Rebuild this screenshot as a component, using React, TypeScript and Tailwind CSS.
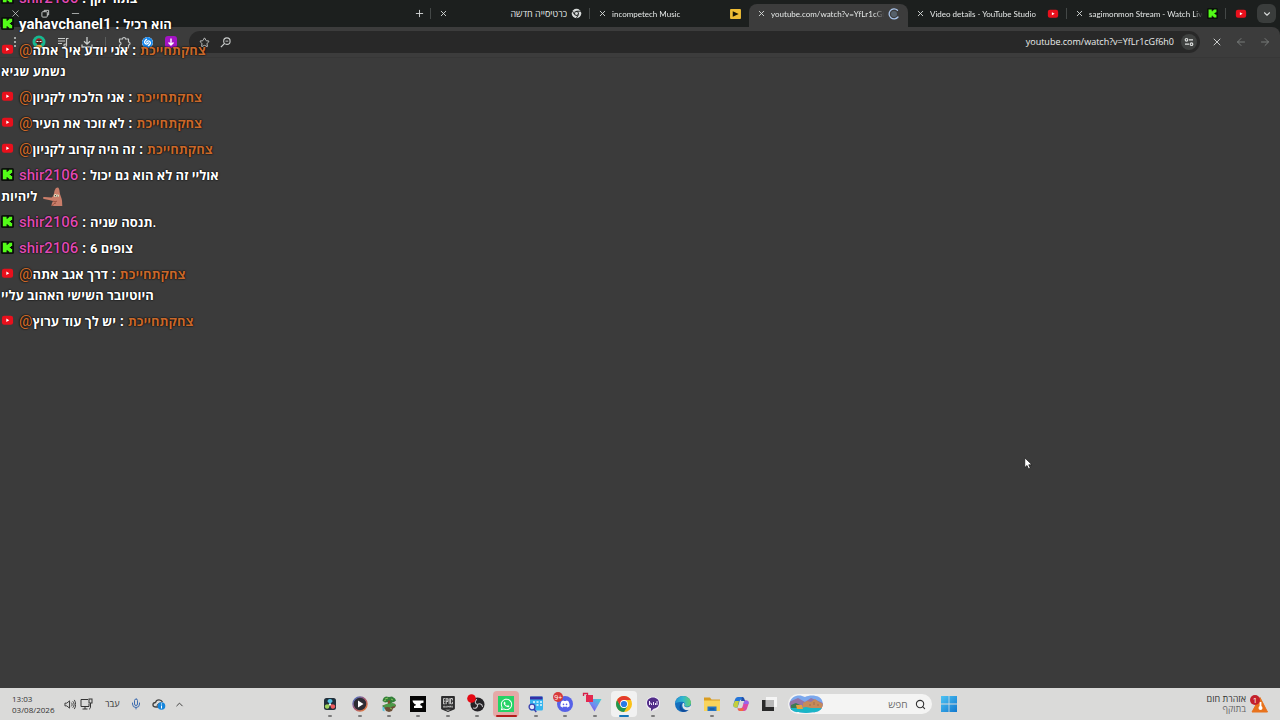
import type { ReactNode } from "react";
import {
  ArrowLeft,
  ArrowRight,
  ChevronDown,
  ChevronUp,
  Mic,
  Minus,
  Plus,
  Search,
  Star,
  X,
} from "lucide-react";
import { FaDiscord, FaWhatsapp } from "react-icons/fa";
import { SiEpicgames, SiShazam } from "react-icons/si";

/* ---------- shared brand icons ---------- */

function KickIcon({ className }: { className?: string }) {
  return (
    <svg viewBox="0 0 14 14" className={className} aria-hidden="true">
      <rect width="14" height="14" rx="2" fill="#0b0f0b" />
      <path
        fill="#53fc18"
        d="M2 2h4v2h1.300V3h1.400V2H12v3.500h-1.300v1H9.500v1h1.200v1H12V12H8.700v-1H7.300v-1H6v2H2z"
      />
    </svg>
  );
}

function YouTubeIcon({ className }: { className?: string }) {
  return (
    <svg viewBox="0 0 14 14" className={className} aria-hidden="true">
      <rect x="1" y="2" width="12" height="9.500" rx="2.400" fill="#e8101c" />
      <path fill="#fff" d="M5.700 4.900v3.700l3.200-1.850z" />
    </svg>
  );
}

function ChromeMono() {
  return (
    <svg viewBox="0 0 12 12" className="size-[11px] shrink-0" aria-hidden="true">
      <circle cx="6" cy="6" r="5.200" fill="#d8dbda" />
      <circle cx="6" cy="6" r="2.600" fill="#1c1f1e" />
      <circle cx="6" cy="6" r="1.600" fill="#d8dbda" />
      <path d="M6 3.500h5M3.800 7.200L1.400 3M8.200 7.200L5.700 11.300" stroke="#1c1f1e" strokeWidth="1" />
    </svg>
  );
}

function PlayFavicon() {
  return (
    <svg viewBox="0 0 12 11" className="h-[10px] w-[11px] shrink-0" aria-hidden="true">
      <rect width="12" height="11" rx="1" fill="#efbd35" />
      <path d="M3 2.500v6l6.500-3z" fill="#1b1605" />
    </svg>
  );
}

function LoadingIcon() {
  return (
    <svg viewBox="0 0 12 12" className="size-3 shrink-0" fill="none" aria-hidden="true">
      <circle cx="6" cy="6" r="3" fill="#56616b" />
      <path d="M9.500 2.200A5 5 0 1 0 10 9" stroke="#a9c4ea" strokeWidth="1.300" strokeLinecap="round" />
    </svg>
  );
}

/* ---------- browser ---------- */

type TabProps = { title: string; icon: ReactNode; active?: boolean; line?: boolean; rtl?: boolean };

const tabs: TabProps[] = [
  { title: "כרטיסייה חדשה", icon: <ChromeMono />, line: true, rtl: true },
  { title: "incompetech Music", icon: <PlayFavicon /> },
  { title: "youtube.com/watch?v=YfLr1cGf6h0", icon: <LoadingIcon />, active: true },
  { title: "Video details - YouTube Studio", icon: <YouTubeIcon className="size-3 shrink-0" />, line: true },
  { title: "sagimonmon Stream - Watch Live on Kick", icon: <KickIcon className="size-[11px] shrink-0" />, line: true },
];

function Tab({ title, icon, active, line, rtl }: TabProps) {
  return (
    <div
      className={
        "relative flex h-[23px] w-[159px] min-w-0 items-center gap-1 rounded-t-lg px-2 pb-1 " +
        (active ? "bg-[#3c3c3c]" : "")
      }
    >
      <button aria-label="Close tab" className="shrink-0 text-[#d9dcdb]">
        <X size={9} strokeWidth={2.4} />
      </button>
      <span
        dir={rtl ? "rtl" : "ltr"}
        className={
          "ml-px flex-1 overflow-hidden whitespace-nowrap font-[Lato,'Open_Sans',sans-serif] leading-3 text-[#e6e9e8] " +
          (rtl ? "text-[9px]" : "text-[8px] [mask-image:linear-gradient(to_right,black_92%,transparent)]")
        }
      >
        {title}
      </span>
      {icon}
      {line && <span className="absolute right-0 h-[11px] w-px bg-[#444847]" />}
    </div>
  );
}

function TabStrip() {
  return (
    <div className="flex h-[27px] items-end bg-[#1c1f1e] pr-1 text-[#d4d7d6]">
      <div className="flex h-full items-center gap-5 pl-[10px]">
        <button aria-label="Close">
          <X size={11} strokeWidth={1.6} />
        </button>
        <button aria-label="Restore">
          <svg viewBox="0 0 10 10" className="size-[9px]" fill="none" stroke="currentColor">
            <rect x="1" y="3" width="6" height="6" rx="1" />
            <path d="M3.500 3V1.500h5v5H7" />
          </svg>
        </button>
        <button aria-label="Minimize">
          <Minus size={11} strokeWidth={1.6} />
        </button>
      </div>
      <div className="min-w-0 flex-1" />
      <button aria-label="New tab" className="mr-[5px] flex h-[23px] items-center pb-1">
        <Plus size={11} strokeWidth={2} />
      </button>
      <span className="mb-2 h-[11px] w-px bg-[#444847]" />
      {tabs.map((tab) => (
        <Tab key={tab.title} {...tab} />
      ))}
      <div className="flex h-[23px] w-[30px] items-center justify-center pb-1">
        <YouTubeIcon className="size-3" />
      </div>
      <button
        aria-label="Search tabs"
        className="mb-1 ml-px flex size-[19px] items-center justify-center rounded-md bg-[#3a3d3c]"
      >
        <ChevronDown size={10} strokeWidth={2.6} />
      </button>
    </div>
  );
}

function Toolbar() {
  return (
    <div className="bg-[#1c1f1e]">
      <div className="flex h-[31px] items-center rounded-tr-lg border-b border-[#373737] bg-[#3c3c3c] pr-[9px] text-[#c9cccb]">
        <div className="flex w-[189px] shrink-0 items-center justify-between pl-[10px] pr-3">
          <button aria-label="Menu">
            <svg viewBox="0 0 10 12" className="h-3 w-[10px]" fill="currentColor">
              <circle cx="5" cy="2" r="1" />
              <circle cx="5" cy="6" r="1" />
              <circle cx="5" cy="10" r="1" />
            </svg>
          </button>
          <button aria-label="Profile">
            <svg viewBox="0 0 14 14" className="size-[14px]">
              <circle cx="7" cy="7" r="6.500" fill="#17b890" />
              <path d="M3.500 7c0-5 7-5 7 0v1h-7z" fill="#9b2226" />
              <circle cx="7" cy="7.500" r="2.500" fill="#37251f" />
              <path d="M3.500 12c1-3 6-3 7 0l-3.500 1.500z" fill="#f2a541" />
              <path d="M4.500 6.500h2M7.500 6.500h2" stroke="#eee" />
            </svg>
          </button>
          <button aria-label="Media controls">
            <svg viewBox="0 0 12 12" className="size-3" fill="none" stroke="currentColor" strokeWidth="1.200">
              <path d="M1 2.500h7M1 5h7M1 7.500h4M9.500 9.500V2.500h2" />
              <circle cx="8.200" cy="9.300" r="1.300" />
            </svg>
          </button>
          <button aria-label="Downloads">
            <svg viewBox="0 0 12 12" className="size-3" fill="none" stroke="currentColor" strokeWidth="1.300">
              <path d="M6 1v7M3 5.200l3 3 3-3M1 8.500V11h10V8.500" />
            </svg>
          </button>
          <span className="h-[10px] w-px bg-[#5a5d5c]" />
          <button aria-label="Extensions">
            <svg viewBox="0 0 13 13" className="size-[13px]" fill="none" stroke="currentColor" strokeWidth="1.200">
              <path d="M1.500 3H4.500a1.500 1.500 0 0 1 3 0H10.500V6a1.500 1.500 0 0 1 0 3v3H1.500V9a1.500 1.500 0 0 0 0-3z" strokeLinejoin="round" />
            </svg>
          </button>
          <button aria-label="Shazam">
            <SiShazam size={11} className="rounded-full bg-white text-[#1688ef]" />
          </button>
          <button aria-label="Video downloader">
            <svg viewBox="0 0 12 12" className="size-3">
              <rect width="12" height="12" rx="3" fill="#a414c4" />
              <path d="M6 2.500v6M3.500 6.500L6 9l2.500-2.500" stroke="#fff" strokeWidth="1.400" fill="none" />
            </svg>
          </button>
        </div>
        <div className="flex h-[22px] min-w-0 flex-1 items-center gap-[10px] rounded-full bg-[#282828] pl-[10px] pr-[3px]">
          <button aria-label="Bookmark">
            <Star size={11} strokeWidth={2} />
          </button>
          <button aria-label="Zoom">
            <svg viewBox="0 0 12 12" className="size-[11px]" fill="none" stroke="currentColor">
              <circle cx="7.500" cy="4.500" r="3.500" strokeWidth="1.200" />
              <path d="M5 7L1 11" strokeWidth="1.400" />
              <path d="M6 4.500h3" />
            </svg>
          </button>
          <input
            type="text"
            aria-label="Address"
            defaultValue="youtube.com/watch?v=YfLr1cGf6h0"
            className="min-w-0 flex-1 bg-transparent text-right text-[9px] leading-3 text-[#ebedec] outline-none"
          />
          <button
            aria-label="Site information"
            className="-ml-[3px] flex size-4 items-center justify-center rounded-full bg-[#3f4140] text-[#dfe1e0]"
          >
            <svg viewBox="0 0 10 10" className="size-[10px]" fill="none" stroke="currentColor" strokeWidth="1.200">
              <circle cx="2.500" cy="2.800" r="1.300" />
              <path d="M5 2.800h4M1 7.200h4" />
              <circle cx="7.500" cy="7.200" r="1.300" />
            </svg>
          </button>
        </div>
        <div className="flex shrink-0 items-center gap-3 pl-[11px]">
          <button aria-label="Stop">
            <X size={12} strokeWidth={2} />
          </button>
          <button aria-label="Forward" className="text-[#777a79]">
            <ArrowLeft size={12} strokeWidth={2} />
          </button>
          <button aria-label="Back" className="text-[#777a79]">
            <ArrowRight size={12} strokeWidth={2} />
          </button>
        </div>
      </div>
    </div>
  );
}

/* ---------- stream chat ---------- */

type Message = { from: "kick" | "youtube"; user: string; text: string; color?: string; emote?: boolean };

const PINK = "text-[#e04bb4] font-medium";

const messages: Message[] = [
  { from: "kick", user: "shir2106", text: "בתור זקן", color: PINK },
  { from: "kick", user: "yahavchanel1", text: "הוא רכיל" },
  { from: "youtube", user: "צחקתחייכת", text: "אני יודע איך אתה נשמע שגיא" },
  { from: "youtube", user: "צחקתחייכת", text: "אני הלכתי לקניון" },
  { from: "youtube", user: "צחקתחייכת", text: "לא זוכר את העיר" },
  { from: "youtube", user: "צחקתחייכת", text: "זה היה קרוב לקניון" },
  { from: "kick", user: "shir2106", text: "אוליי זה לא הוא גם יכול ליהיות", color: PINK, emote: true },
  { from: "kick", user: "shir2106", text: "תנסה שניה.", color: PINK },
  { from: "kick", user: "shir2106", text: "6 צופים", color: PINK },
  { from: "youtube", user: "צחקתחייכת", text: "דרך אגב אתה היוטיובר השישי האהוב עליי" },
  { from: "youtube", user: "צחקתחייכת", text: "יש לך עוד ערוץ" },
];

function PatrickEmote() {
  return (
    <svg viewBox="0 0 20 20" className="ml-[6px] inline-block size-5 align-middle" aria-hidden="true">
      <path
        d="M14.500 0.500c1.500 0 2 2 2.200 5 .3 3 2 5 2.300 8l.3 5.500H8.500c0-2 .7-3.500 1.500-5l-4-1-5-1c-1.500-.5-1-2.500.5-2l7 .5c1.500-1 2-2 2.500-4 .5-3 1.500-6 3.500-6z"
        fill="#c97d69"
      />
      <path d="M10 14c1 1 3 1 4 0M9.500 19c.5-2 2-3 3.500-3" stroke="#94503f" fill="none" />
      <circle cx="12.300" cy="8.500" r="1.500" fill="#e9e4c5" />
      <circle cx="14.800" cy="8.700" r="1.300" fill="#e9e4c5" />
      <circle cx="12.400" cy="8.700" r=".6" fill="#222" />
      <circle cx="14.700" cy="8.900" r=".5" fill="#222" />
    </svg>
  );
}

function ChatLine({ from, user, text, color, emote }: Message) {
  return (
    <li>
      {from === "kick" ? (
        <>
          <KickIcon className="mr-[5px] inline-block size-[13px] align-[-1px]" />
          <span className={color}>{user}</span>
        </>
      ) : (
        <>
          <YouTubeIcon className="mr-[5px] inline-block size-[13px] align-[-1px]" />
          <span className="text-[#c8682b]">
            <span className="font-medium">@</span>
            <span className="text-[13px] leading-none">{user}</span>
          </span>
        </>
      )}
      {" : "}
      <span className="text-[13px] leading-none">{text}</span>
      {emote && <PatrickEmote />}
    </li>
  );
}

function Chat() {
  return (
    <ul className="pointer-events-none absolute -top-3 left-0 flex w-[232px] flex-col gap-[5px] px-px font-[Roboto,'Open_Sans',sans-serif] text-[15px] font-bold leading-[21px] text-white [text-shadow:0_0_2px_#000,0_0_1px_#000]">
      {messages.map((m, i) => (
        <ChatLine key={i} {...m} />
      ))}
    </ul>
  );
}

/* ---------- taskbar ---------- */

type App = { name: string; icon: ReactNode; running?: boolean; state?: "alert" | "focus" };

const svg = "size-4 overflow-visible";

const apps: App[] = [
  {
    name: "DaVinci Resolve",
    running: true,
    icon: (
      <svg viewBox="0 0 16 16" className={svg}>
        <rect x="2" y="2" width="12" height="12" rx="2.500" fill="#22303c" />
        <path d="M8 8.200L5.500 5.500a2.500 2.500 0 1 1 5 0z" fill="#58c7e8" />
        <path d="M8 8.200l-1 3.500a2.300 2.300 0 1 1-3-3.300z" fill="#9fd35f" />
        <path d="M8 8.200l1 3.500a2.300 2.300 0 1 0 3-3.300z" fill="#ef5d60" />
        <circle cx="8" cy="8.500" r="1" fill="#fff" />
      </svg>
    ),
  },
  {
    name: "Media player",
    running: true,
    icon: (
      <svg viewBox="0 0 16 16" className={svg}>
        <defs>
          <linearGradient id="player" x1="0" y1="0" x2="1" y2="1">
            <stop stopColor="#3f74c9" />
            <stop offset=".5" stopColor="#a85873" />
            <stop offset="1" stopColor="#ed8231" />
          </linearGradient>
        </defs>
        <circle cx="8" cy="8" r="7" fill="#2d2c33" stroke="url(#player)" strokeWidth="1.500" />
        <path d="M6 4.500v7l5.500-3.500z" fill="#fff" />
      </svg>
    ),
  },
  {
    name: "Terraria",
    running: true,
    icon: (
      <svg viewBox="0 0 16 16" className={svg}>
        <path d="M3 1.500l2-1 3 .5 3-.5 3 2 1 2-2 1.500-2 .5-1 1.500H8L6.500 6 4 6.500 1.500 5l.5-2z" fill="#33803a" />
        <path d="M7 4.500h2l.5 5H6.500z" fill="#7d4c2c" />
        <path d="M1.500 9.500l4-1 8-1 1.500 2-1 2-2 1-1 2.500-3 1-3-1-1-2-2-1z" fill="#6c4d35" />
        <path d="M1.500 9.500l4-1.500 6-1 3 1.500v1.500l-3 .5-2 1-3-.5-3 .5z" fill="#4c9a48" />
        <path d="M1.500 10.500l2 1v4l-2-1z" fill="#5cc7df" />
        <path d="M4 3l3-1M10 3l2 1M3 5l2-1M9 12l2 1" stroke="#86c45a" />
      </svg>
    ),
  },
  {
    name: "Anvil",
    running: true,
    icon: (
      <svg viewBox="0 0 16 16" className={svg}>
        <rect width="16" height="16" fill="#050505" />
        <path d="M2.500 4.500h11v2.300c-2 0-3 .7-3.300 1.700.2.800.8 1.300 2 1.500v2H4v-2c1.300-.2 2-.7 2-1.500C4.500 8.300 3 7 2.500 4.500z" fill="#fff" />
      </svg>
    ),
  },
  { name: "Epic Games", running: true, icon: <SiEpicgames size={16} className="text-[#2c2c2d]" /> },
  {
    name: "OBS Studio",
    running: true,
    icon: (
      <svg viewBox="0 0 16 16" className={svg}>
        <circle cx="8.500" cy="8.500" r="7" fill="#252327" />
        <path
          d="M8.500 8.500C6 8 5.500 5.500 7.500 3.500M8.500 8.500c2-1.500 4.500-.5 5 2M8.500 8.500c.5 2.500-1.500 4.300-4 3.500"
          stroke="#c6c4c7"
          strokeWidth="1.100"
          fill="none"
          strokeLinecap="round"
        />
        <circle cx="2.500" cy="2.500" r="4.300" fill="#e50914" />
      </svg>
    ),
  },
  {
    name: "WhatsApp",
    state: "alert",
    icon: (
      <span className="flex size-4 items-center justify-center bg-[#25d366] text-white">
        <FaWhatsapp size={13} />
      </span>
    ),
  },
  {
    name: "Scheduler",
    running: true,
    icon: (
      <svg viewBox="0 0 16 16" className={svg}>
        <rect x="2" y="0.500" width="13" height="14" rx="1.500" fill="#35b5ef" />
        <path d="M2 0.500h12.500v3H2z" fill="#352fa5" />
        <path d="M5 6h2M8.500 6h2M12 6h2M8.500 9h2M12 9h2" stroke="#e5f9ff" strokeWidth="1.300" />
        <circle cx="4" cy="11" r="2.900" fill="#e3e7fb" stroke="#3940ae" strokeWidth="1.300" />
        <path d="M6 13.200l2.300 2.800" stroke="#3940ae" strokeWidth="1.400" />
      </svg>
    ),
  },
  {
    name: "Discord",
    running: true,
    icon: (
      <span className="relative block">
        <span className="flex size-4 items-center justify-center rounded-full bg-[#5661e8] text-white">
          <FaDiscord size={10} />
        </span>
        <span className="absolute -left-1 -top-1 flex h-[10px] items-center rounded-full bg-[#d83a3a] px-px text-[7px] leading-none text-white">
          9+
        </span>
      </span>
    ),
  },
  {
    name: "Proton",
    running: true,
    icon: (
      <svg viewBox="0 0 16 16" className={svg}>
        <defs>
          <linearGradient id="prism" x1="1" y1="0" x2="0" y2="1">
            <stop stopColor="#3fd3cd" />
            <stop offset=".5" stopColor="#718af2" />
            <stop offset="1" stopColor="#7637d5" />
          </linearGradient>
        </defs>
        <path d="M0 3h14.500L7.500 15.500z" fill="url(#prism)" />
        <rect x="-1" y="-1" width="7" height="7" fill="#e4284f" />
        <path d="M-3.500 0v-2.500h4V0" stroke="#d7204a" strokeWidth="1.300" fill="none" />
      </svg>
    ),
  },
  {
    name: "Chrome",
    state: "focus",
    icon: (
      <svg viewBox="0 0 16 16" className={svg}>
        <circle cx="8" cy="8" r="8" fill="#fbc116" />
        <path d="M1.100 4A8 8 0 0 0 8 16l3.500-6L8 8l-3.500 2z" fill="#219653" />
        <path d="M8 4h6.900a8 8 0 0 0-13.800 0l3.400 6z" fill="#e33b2e" />
        <circle cx="8" cy="8" r="3.900" fill="#fff" />
        <circle cx="8" cy="8" r="3.100" fill="#287ae6" />
      </svg>
    ),
  },
  {
    name: "Chat bot",
    running: true,
    icon: (
      <svg viewBox="0 0 16 16" className={svg}>
        <circle cx="8" cy="7.500" r="7" fill="#f0ecf6" />
        <path d="M8 1.500c3.500 0 6 2.300 6 5.500s-2.500 5.500-5 5.500L6 15v-2.800C3.500 11.500 2 9.500 2 7c0-3.200 2.500-5.500 6-5.500z" fill="#512c88" />
        <path d="M4.500 5v4M4.500 7.500c2-1 2 0 2 1.500M8.500 6v3M10.500 7v2M12 5v4" stroke="#efe7ff" fill="none" />
      </svg>
    ),
  },
  {
    name: "Edge",
    icon: (
      <svg viewBox="0 0 16 16" className={svg}>
        <defs>
          <linearGradient id="edge" x1="0" y1="0" x2="1" y2="0">
            <stop stopColor="#2591d2" />
            <stop offset=".5" stopColor="#31b8cd" />
            <stop offset="1" stopColor="#66cf6d" />
          </linearGradient>
        </defs>
        <circle cx="8" cy="8" r="8" fill="#146fbe" />
        <path d="M0 7.500C.5 3 4 0 8.200 0 13 0 16 3.500 16 6.800c0 2.500-2 4-4.200 4-2 0-2.800-1-2-2 .6-1-.3-3-2.800-3C3.500 5.800.5 7 0 7.500z" fill="url(#edge)" />
        <path d="M9.500 8.500c-1 1.500.5 2.800 2.500 2.800 1.600 0 3-.6 3.800-1.800.4 1.500.2 2.800-.6 3.800-1 .7-2 .9-3.200.9C8.500 14.200 6 10 8 7c1 0 1.800.7 1.500 1.500z" fill="#e0e6e9" />
        <path d="M7 7c-2.300 3 .3 7 4 7.300 1.300 0 2.200-.3 3-.6A8 8 0 0 1 9 16C4 16 3 9 7 7z" fill="#124d9c" />
      </svg>
    ),
  },
  {
    name: "File Explorer",
    running: true,
    icon: (
      <svg viewBox="0 0 16 16" className={svg}>
        <path d="M0 1.500h6l1.500 2H16V14H0z" fill="#d99c20" />
        <path d="M0 4.500h16V15H0z" fill="#f9d45b" />
        <path d="M3.500 15v-4.500h9V15z" fill="#2375c5" />
        <path d="M5.500 13h5" stroke="#174e87" />
      </svg>
    ),
  },
  {
    name: "Copilot",
    icon: (
      <svg viewBox="0 0 16 16" className={svg}>
        <path d="M5 1h4c1.500 0 2 1 2.500 2.500H9C7 3.500 6.500 5 6 7l-1.500 4.500H3C.5 11.500 0 10 .5 8L2 3.500C2.500 2 3.500 1 5 1z" fill="#2576d9" />
        <path d="M.5 8L2 5h4l-1.500 6.500H3C.5 11.500 0 10 .5 8z" fill="#c5cf3b" />
        <path d="M11 15H7c-1.500 0-2-1-2.500-2.500H7c2 0 2.500-1.500 3-3.500l1.500-4.500H13c2.500 0 3 1.500 2.500 3.500L14 12.500c-.5 1.500-1.500 2.500-3 2.500z" fill="#db49a5" />
        <path d="M11.500 4.500H13c2.500 0 3 1.500 2.500 3.500H10.300z" fill="#9764ed" />
        <path d="M7 12.500H4.500C5 14 5.500 15 7 15h3l1-3z" fill="#f2683f" />
        <path d="M9 1c1.500 0 2 1 2.500 2.500L12 5H8z" fill="#234fa9" />
      </svg>
    ),
  },
  {
    name: "Task view",
    icon: (
      <svg viewBox="0 0 16 16" className={svg}>
        <path d="M3 1h11v10H3z" fill="#f5f5f5" />
        <path d="M-1 4h12v11H-1z" fill="#292929" />
        <path d="M2.500 4H11v7H2.500z" fill="#b8b8b8" />
      </svg>
    ),
  },
];

function TaskbarApp({ name, icon, running, state }: App) {
  return (
    <button
      aria-label={name}
      className={
        "relative mx-auto flex h-[26px] w-[26px] items-center justify-center rounded-sm " +
        (state === "alert" ? "bg-[#e5a9a7]" : state === "focus" ? "bg-[#f1f1f1]" : "")
      }
    >
      {icon}
      {running && <span className="absolute bottom-0 h-[2px] w-1 rounded-full bg-[#7b7b7b]" />}
      {state === "alert" && <span className="absolute bottom-0 h-[2px] w-[21px] rounded-full bg-[#b51c1c]" />}
      {state === "focus" && <span className="absolute bottom-0 h-[2px] w-[10px] rounded-full bg-[#1676b8]" />}
    </button>
  );
}

function SearchArt() {
  return (
    <svg viewBox="0 0 34 18" className="h-[18px] w-[34px] shrink-0" aria-hidden="true">
      <defs>
        <clipPath id="art">
          <path d="M7 1c4-1 6 0 9 1 4-2 10-2 14 0 4 2 5 8 2 12-3 4-9 3-15 4-6-1-12 0-15-4C-1 9 1 3 7 1z" />
        </clipPath>
      </defs>
      <g clipPath="url(#art)">
        <path d="M0 0h34v18H0z" fill="#7ba8ed" />
        <path d="M0 7L9 3l7 4 6-4 12 5v7H0z" fill="#9575a6" />
        <path d="M14 8l4-2 4 1 4-3 4 3 4 2v5H14z" fill="#c68a5a" />
        <path d="M2 10l5-2 6 3v4H2z" fill="#3d7b54" />
        <path d="M0 13h12l5-1 5 1h12v5H0z" fill="#19b6c6" />
        <path d="M7 10h6l1 4H8z" fill="#e4a33c" />
        <path d="M21 9v2M25 7v3M29 9v2" stroke="#a06d4c" />
      </g>
    </svg>
  );
}

function Taskbar() {
  return (
    <footer className="grid h-8 grid-cols-[1fr_auto_1fr] items-center bg-[#dadad9] text-[#333]">
      <div className="flex items-center pl-3">
        <div className="w-[52px] whitespace-nowrap text-[8px] leading-[11px]">
          <div>13:03</div>
          <div>03/08/2026</div>
        </div>
        <svg viewBox="0 0 13 12" className="h-[11px] w-3" fill="none" stroke="currentColor" aria-hidden="true">
          <path d="M1 4.500h2L6 2v8L3 7.500H1zM8 4c1 1 1 3 0 4M9.500 2.500c2 2 2 5 0 7M11.200 1c2 3 2 7 0 10" />
        </svg>
        <svg viewBox="0 0 13 12" className="ml-1 h-3 w-[13px]" fill="none" stroke="currentColor" aria-hidden="true">
          <path d="M8 1.500H1v7h8V6M5 8.500V11M2.500 11h5M10.500 5v4c0 1-.5 2-1.500 2" />
          <rect x="9" y="1" width="3" height="4" />
        </svg>
        <span className="ml-3 text-[9px] leading-3">עבר</span>
        <Mic size={12} strokeWidth={2} className="ml-[10px] text-[#3e6db0]" />
        <svg viewBox="0 0 14 12" className="ml-[10px] h-3 w-[14px]" fill="none" aria-hidden="true">
          <path d="M6 9H4C0 9 0 5 3.500 4.500 4.500 1 9 1 10.500 4" stroke="#444" strokeWidth="1.300" />
          <path d="M5 8.500C5 6 7 5 9 5" stroke="#444" />
          <circle cx="9.500" cy="8" r="3.800" fill="#1685db" />
          <path d="M9.500 7.500v3M9.500 5.500v1" stroke="#fff" />
        </svg>
        <ChevronUp size={11} strokeWidth={2} className="ml-2" />
      </div>

      <div className="flex items-center pr-2">
        <div className="grid w-[470px] grid-cols-16">
          {apps.map((app) => (
            <TaskbarApp key={app.name} {...app} />
          ))}
        </div>
        <label className="ml-[2px] flex h-5 w-[144px] items-center rounded-full bg-[#f4f4f3] pl-px pr-[6px]">
          <SearchArt />
          <input
            type="text"
            dir="rtl"
            placeholder="חפש"
            aria-label="חפש"
            className="mr-[7px] min-w-0 flex-1 bg-transparent text-[10px] leading-3 outline-none placeholder:text-[#6c6c6c]"
          />
          <Search size={11} strokeWidth={2.4} />
        </label>
        <button aria-label="Start" className="ml-[9px]">
          <svg viewBox="0 0 16 16" className="size-4">
            <defs>
              <linearGradient id="start" x1="0" y1="0" x2="1" y2="1">
                <stop stopColor="#4dc3f3" />
                <stop offset="1" stopColor="#1178cf" />
              </linearGradient>
            </defs>
            <path d="M0 0h7.600v7.600H0zM8.400 0H16v7.600H8.400zM0 8.400h7.600V16H0zM8.400 8.400H16V16H8.400z" fill="url(#start)" />
          </svg>
        </button>
      </div>

      <div className="flex items-center justify-end gap-1 pr-3">
        <div dir="rtl" className="text-[9px] leading-[10px]">
          <div>אזהרת חום</div>
          <div className="text-[#666]">בתוקף</div>
        </div>
        <svg viewBox="0 0 18 20" className="h-5 w-[18px]" aria-hidden="true">
          <path d="M10 3.500L17.500 18H2z" fill="#e8721c" stroke="#e8721c" strokeLinejoin="round" />
          <circle cx="10.500" cy="14" r="2" fill="#fff" />
          <path d="M10.500 8v6" stroke="#fff" strokeWidth="1.800" />
          <circle cx="5" cy="6" r="5" fill="#c4202b" />
          <text x="5" y="9" textAnchor="middle" fontSize="8" fill="#fff">
            1
          </text>
        </svg>
      </div>
    </footer>
  );
}

export default function App() {
  return (
    <div className="relative flex min-h-screen flex-col overflow-hidden bg-[#3b3b3b] font-['Open_Sans','Noto_Sans',sans-serif]">
      <header>
        <TabStrip />
        <Toolbar />
      </header>
      <main className="flex-1" />
      <Taskbar />
      <Chat />
      <svg
        viewBox="0 0 10 15"
        className="pointer-events-none absolute left-[80%] top-[457px] h-[13px] w-[9px]"
        aria-hidden="true"
      >
        <path d="M.7 1v11.200l2.600-2.400 1.800 4 2-.9-1.800-3.900H9z" fill="#fff" stroke="#111" strokeWidth=".8" />
      </svg>
    </div>
  );
}
